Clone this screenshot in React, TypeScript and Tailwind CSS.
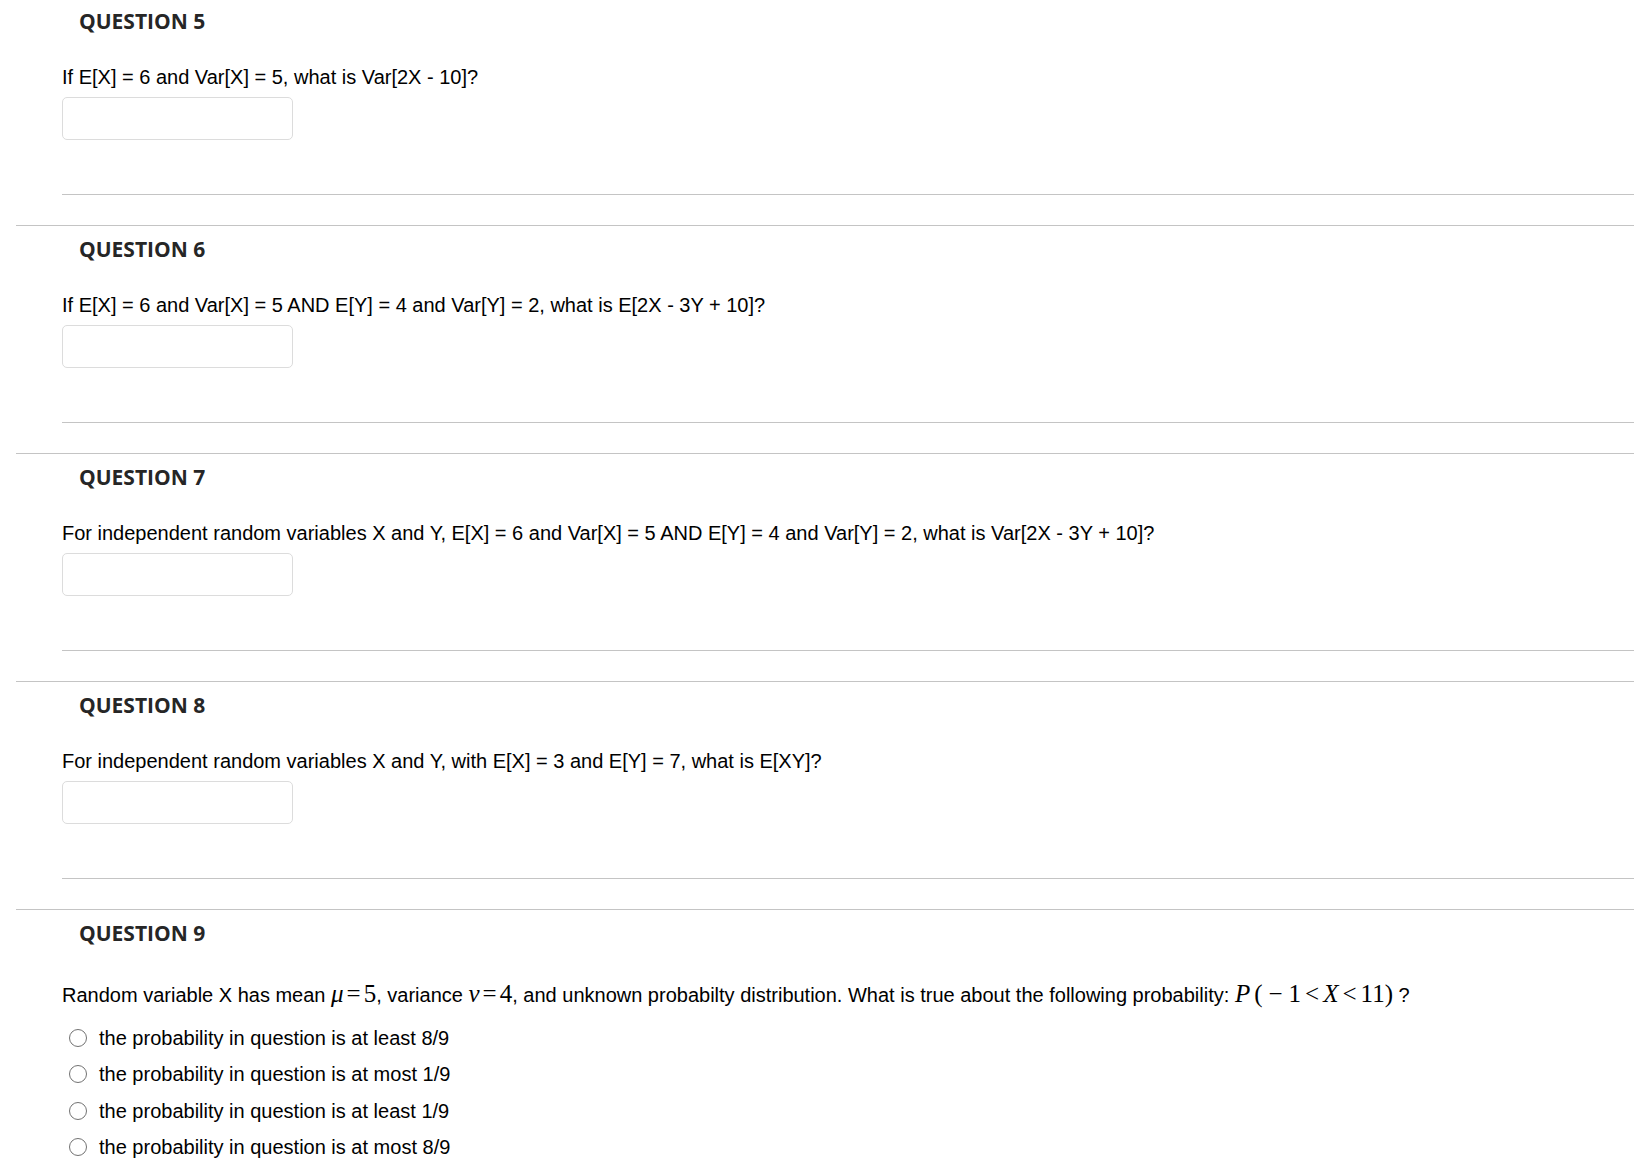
import React from 'react';

interface Question {
  num: number;
  text: React.ReactNode;
  options?: string[];
}

const heading = { fontFamily: '"Open Sans", "DejaVu Sans", sans-serif' };
const body = { fontFamily: '"Liberation Sans", Arial, sans-serif' };
const math = { fontFamily: '"Liberation Serif", "Times New Roman", serif' };

function M({ children }: { children: React.ReactNode }) {
  return (
    <span className="text-[25px]" style={math}>
      {children}
    </span>
  );
}

function Rel({ children, gap = 'mx-[4px]' }: { children: React.ReactNode; gap?: string }) {
  return <span className={gap}>{children}</span>;
}

const questions: Question[] = [
  { num: 5, text: 'If E[X] = 6 and Var[X] = 5, what is Var[2X - 10]?' },
  { num: 6, text: 'If E[X] = 6 and Var[X] = 5 AND E[Y] = 4 and Var[Y] = 2, what is E[2X - 3Y + 10]?' },
  {
    num: 7,
    text: 'For independent random variables X and Y, E[X] = 6 and Var[X] = 5 AND E[Y] = 4 and Var[Y] = 2, what is Var[2X - 3Y + 10]?',
  },
  { num: 8, text: 'For independent random variables X and Y, with E[X] = 3 and E[Y] = 7, what is E[XY]?' },
  {
    num: 9,
    text: (
      <>
        Random variable X has mean{' '}
        <M>
          <i>μ</i>
          <Rel gap="mx-[3px]">=</Rel>5
        </M>
        , variance{' '}
        <M>
          <i>ν</i>
          <Rel gap="mx-[3px]">=</Rel>4
        </M>
        , and unknown probabilty distribution. What is true about the following probability:{' '}
        <M>
          <i>P</i>
          <Rel gap="ml-[4px]">(</Rel>
          <Rel gap="mx-[6px]">−</Rel>1<Rel>&lt;</Rel>
          <i>X</i>
          <Rel>&lt;</Rel>11)
        </M>{' '}
        ?
      </>
    ),
    options: [
      'the probability in question is at least 8/9',
      'the probability in question is at most 1/9',
      'the probability in question is at least 1/9',
      'the probability in question is at most 8/9',
    ],
  },
];

function QuestionBlock({ q, first }: { q: Question; first: boolean }) {
  return (
    <div className={first ? 'ml-[16px] pt-[6px]' : 'ml-[16px] border-t border-[#c4c4c4] pt-[8px]'}>
      <h3 className="pl-[63px] text-[21px] leading-[30px] font-bold text-[#262626]" style={heading}>
        QUESTION {q.num}
      </h3>
      <div className={q.options ? 'pl-[46px] pt-[34px]' : 'pl-[46px] pt-[29px]'} style={body}>
        <p className="text-[20px] leading-[24px] text-black whitespace-nowrap">{q.text}</p>
        {q.options ? (
          <div className="mt-[13px] flex flex-col">
            {q.options.map((o) => (
              <label key={o} className="flex h-[36.3px] items-center gap-[12px] pl-[7px] text-[20px] text-black">
                <span className="h-[18px] w-[18px] rounded-full border-[1.5px] border-[#727272] bg-white" />
                {o}
              </label>
            ))}
          </div>
        ) : (
          <>
            <div className="mt-[8px] h-[43px] w-[231px] rounded-[5px] border border-[#dcdcdc] bg-white" />
            <div className="mt-[54px] border-t border-[#c4c4c4]" />
            <div className="h-[30px]" />
          </>
        )}
      </div>
    </div>
  );
}

export default function App() {
  return (
    <div className="min-h-screen bg-white overflow-hidden">
      {questions.map((q, i) => (
        <QuestionBlock key={q.num} q={q} first={i === 0} />
      ))}
    </div>
  );
}
